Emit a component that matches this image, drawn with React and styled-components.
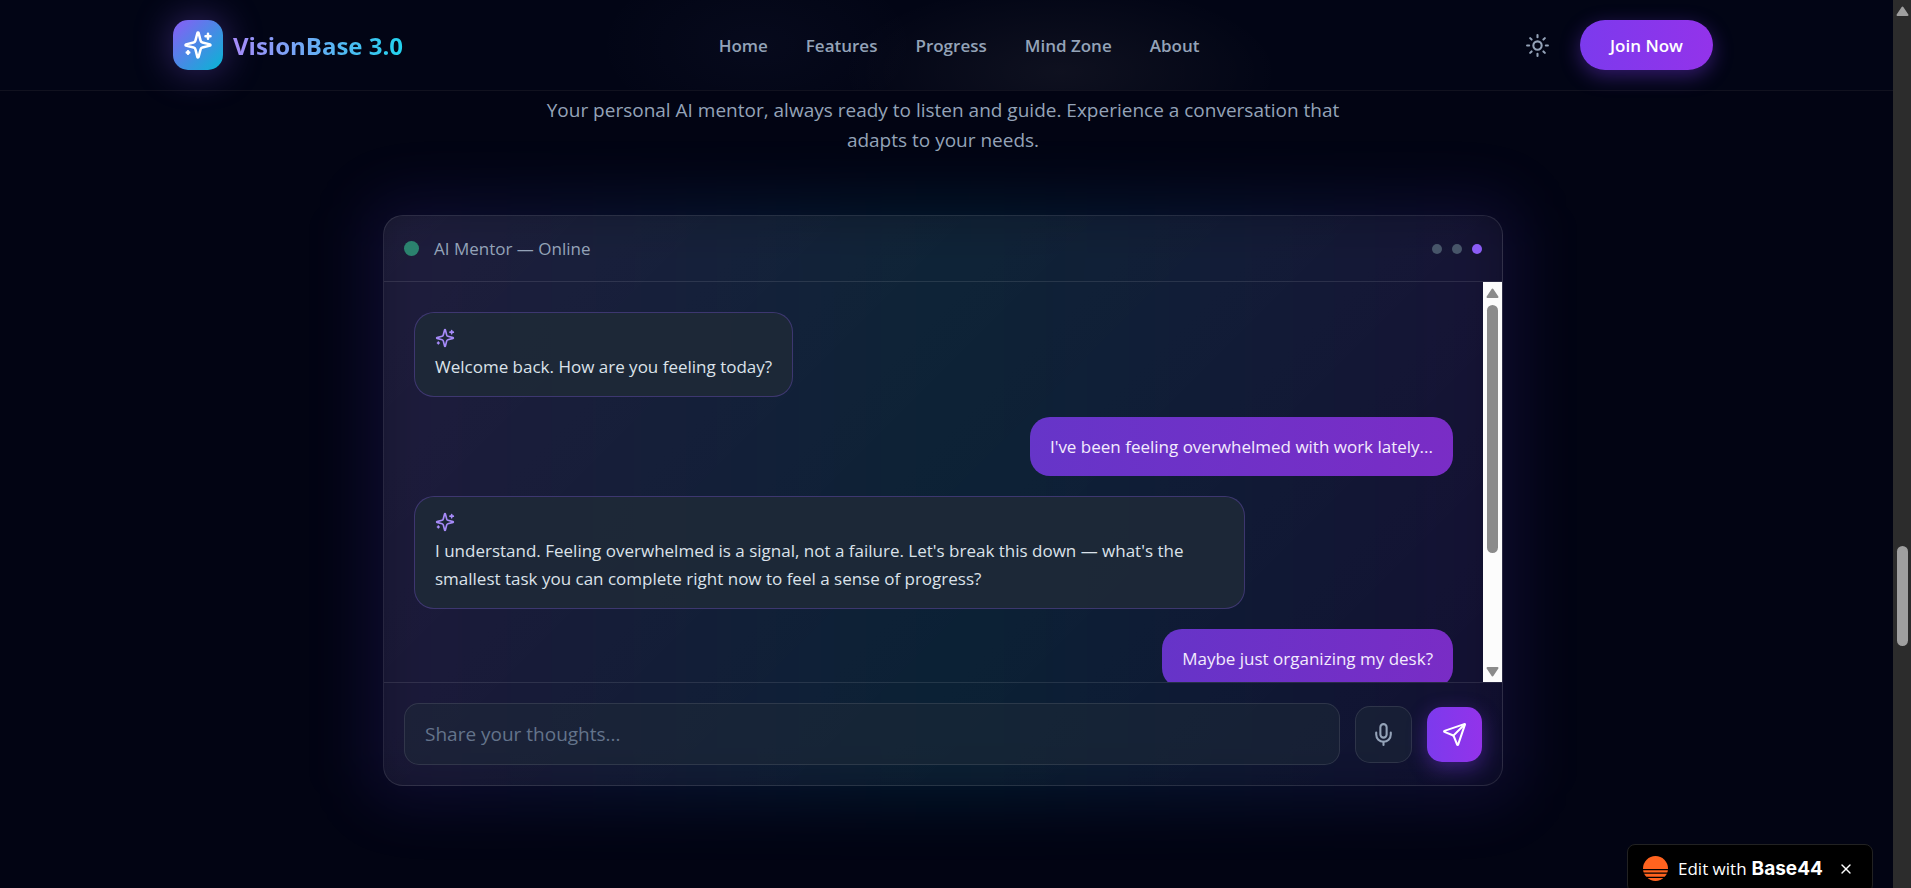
import { useState } from 'react';
import styled, { createGlobalStyle, css } from 'styled-components';
import { Sun, Mic, Send, X } from 'lucide-react';

const GlobalStyle = createGlobalStyle`
  *, *::before, *::after {
    box-sizing: border-box;
  }

  body {
    margin: 0;
    background: #020413;
    color: #e2e8f0;
    font-family: 'Open Sans', 'Noto Sans', sans-serif;
  }

  button, input {
    font-family: inherit;
  }

  p {
    margin: 0;
  }
`;

const Shell = styled.div`
  display: flex;
  height: 100vh;
  overflow: hidden;
`;

const Page = styled.div`
  position: relative;
  flex: 1;
  min-width: 0;
  overflow: hidden;
`;

const Header = styled.header`
  position: relative;
  z-index: 2;
  padding-right: 7px;
  border-bottom: 1px solid #11121f;
  background:
    radial-gradient(ellipse 220px 90px at 56% 80%, rgba(255, 240, 230, .05), transparent),
    radial-gradient(ellipse 160px 90px at 40% 50%, rgba(150, 160, 255, .03), transparent),
    #020515;
`;

const Container = styled.div`
  display: flex;
  align-items: center;
  justify-content: space-between;
  max-width: 1600px;
  margin: 0 auto;
  padding: 20px 30px;
`;

const Brand = styled.a`
  display: flex;
  align-items: center;
  gap: 10px;
  text-decoration: none;
`;

const BrandIcon = styled.span`
  display: flex;
  align-items: center;
  justify-content: center;
  width: 50px;
  height: 50px;
  border-radius: 15px;
  color: #fff;
  background: linear-gradient(135deg, #8b5cf6, #06b6d4);
  box-shadow: 0 0 38px rgba(139, 92, 246, .4);
`;

const BrandName = styled.span`
  padding-top: 2px;
  font-size: 24px;
  font-weight: 700;
  line-height: 36px;
  color: transparent;
  background: linear-gradient(90deg, #a78bfa, #22d3ee);
  background-clip: text;
  -webkit-background-clip: text;
`;

const Nav = styled.nav`
  display: flex;
  gap: 38px;
  padding-top: 2px;
`;

const NavLink = styled.a`
  color: #94a3b8;
  font-size: 17px;
  font-weight: 600;
  line-height: 26px;
  text-decoration: none;
`;

const Actions = styled.div`
  display: flex;
  align-items: center;
  gap: 20px;
`;

const ThemeButton = styled.button`
  display: flex;
  padding: 10px;
  border: 0;
  background: none;
  color: #94a3b8;
`;

const JoinButton = styled.button`
  height: 50px;
  padding: 0 30px;
  border: 0;
  border-radius: 25px;
  color: #fff;
  background: linear-gradient(90deg, #7c3aed, #9333ea);
  box-shadow: 0 6px 20px rgba(124, 58, 237, .4);
  font-size: 17px;
  font-weight: 600;
`;

const Section = styled.section`
  padding: 4px 7px 100px 0;
`;

const Lead = styled.p`
  max-width: 840px;
  margin: 0 auto 60px;
  color: #94a3b8;
  font-size: 19px;
  line-height: 30px;
  text-align: center;
`;

const Stage = styled.div`
  position: relative;
  max-width: 1120px;
  margin: 0 auto;

  &::before {
    content: '';
    position: absolute;
    inset: -15px;
    border-radius: 30px;
    background: linear-gradient(90deg, rgba(105, 62, 237, .13), rgba(6, 170, 225, .13), rgba(105, 62, 237, .13));
    filter: blur(30px);
  }
`;

const Card = styled.div`
  position: relative;
  overflow: hidden;
  border: 1px solid rgba(255, 255, 255, .1);
  border-radius: 20px;
  background: linear-gradient(135deg, rgba(255, 255, 255, .07), rgba(255, 255, 255, .02));
`;

const CardHeader = styled.div`
  display: flex;
  align-items: center;
  gap: 15px;
  height: 66px;
  padding: 0 20px;
  border-bottom: 1px solid rgba(255, 255, 255, .1);
`;

const Dot = styled.span`
  flex: none;
  width: ${props => props.$size}px;
  height: ${props => props.$size}px;
  border-radius: 50%;
  background: ${props => props.$color};
`;

const Status = styled.span`
  flex: 1;
  color: #94a3b8;
  font-size: 17px;
  line-height: 26px;
`;

const Dots = styled.div`
  display: flex;
  gap: 10px;
`;

const Chat = styled.div`
  display: flex;
  height: 400px;
`;

const Messages = styled.div`
  display: flex;
  flex: 1;
  flex-direction: column;
  align-items: flex-start;
  gap: 20px;
  padding: 30px;
  overflow: hidden;
`;

const Bubble = styled.div`
  flex: none;
  max-width: 80%;
  padding: 15px 20px;
  border-radius: 20px;
  font-size: 17px;
  line-height: 28px;

  ${props => props.$mine ? css`
    align-self: flex-end;
    color: #f3ebfd;
    background: linear-gradient(90deg, rgba(124, 58, 237, .8), rgba(147, 51, 234, .8));
    line-height: 29px;
  ` : css`
    border: 1px solid rgba(139, 92, 246, .3);
    color: #dbe2ea;
    background: rgba(30, 41, 55, .9);
  `}

  svg {
    display: block;
    margin-bottom: 5px;
    color: #a78bfa;
  }
`;

const Composer = styled.form`
  display: flex;
  align-items: center;
  gap: 15px;
  padding: 20px;
  border-top: 1px solid rgba(255, 255, 255, .1);
`;

const Field = styled.input`
  flex: 1;
  min-width: 0;
  height: 62px;
  padding: 0 20px;
  border: 1px solid rgba(255, 255, 255, .1);
  border-radius: 15px;
  outline: 0;
  background: rgba(30, 41, 55, .5);
  color: #e2e8f0;
  font-size: 19px;

  &::placeholder {
    color: #64748b;
    opacity: 1;
  }
`;

const IconButton = styled.button`
  display: flex;
  align-items: center;
  justify-content: center;
  width: 57px;
  height: 57px;
  border: 1px solid rgba(255, 255, 255, .1);
  border-radius: 15px;
  color: #94a3b8;
  background: rgba(30, 41, 55, .5);

  ${props => props.$primary && css`
    width: 55px;
    height: 55px;
    border: 0;
    color: #fff;
    background: linear-gradient(90deg, #7c3aed, #9333ea);
    box-shadow: 0 6px 20px rgba(124, 58, 237, .4);
  `}
`;

const ScrollTrack = styled.div`
  display: flex;
  flex: none;
  flex-direction: column;
  align-items: center;
  width: ${props => props.$dark ? 18 : 19}px;
  padding: 6px 0 5px;
  background: ${props => props.$dark ? '#2c2c2c' : '#fcfcfc'};
  color: ${props => props.$dark ? '#9f9f9f' : '#8b8b8b'};
`;

const ScrollRail = styled.div`
  flex: 1;
  width: 11px;
  padding-top: ${props => props.$start}px;
`;

const ScrollThumb = styled.div`
  height: ${props => props.$length}px;
  border-radius: 6px;
  background: currentColor;
`;

const Badge = styled.div`
  position: absolute;
  z-index: 3;
  right: 20px;
  bottom: -5px;
  display: flex;
  align-items: center;
  height: 49px;
  width: 246px;
  padding: 0 15px;
  border: 1px solid #222;
  border-radius: 8px;
  background: #000;
`;

const BadgeLink = styled.a`
  display: flex;
  flex: 1;
  align-items: center;
  color: #fff;
  font-size: 17px;
  text-decoration: none;
  white-space: nowrap;

  svg {
    margin-right: 10px;
  }

  strong {
    margin-left: 5px;
    font-family: Inter, sans-serif;
    font-size: 19px;
    font-weight: 700;
  }
`;

const BadgeClose = styled.button`
  display: flex;
  padding: 3px;
  border: 0;
  background: none;
  color: #fff;
`;

const links = ['Home', 'Features', 'Progress', 'Mind Zone', 'About'];

const messages = [
  { text: 'Welcome back. How are you feeling today?' },
  { mine: true, text: "I've been feeling overwhelmed with work lately..." },
  { text: "I understand. Feeling overwhelmed is a signal, not a failure. Let's break this down — what's the smallest task you can complete right now to feel a sense of progress?" },
  { mine: true, text: 'Maybe just organizing my desk?' }
];

const Sparkles = ({ size }) => (
  <svg
    width={size}
    height={size}
    viewBox="0 0 24 24"
    fill="none"
    stroke="currentColor"
    strokeWidth="2"
    strokeLinecap="round"
    strokeLinejoin="round"
    aria-hidden="true"
  >
    <path d="M9.937 15.5A2 2 0 0 0 8.5 14.063l-6.135-1.582a.5.5 0 0 1 0-.962L8.5 9.936A2 2 0 0 0 9.937 8.5l1.582-6.135a.5.5 0 0 1 .963 0L14.063 8.5A2 2 0 0 0 15.5 9.937l6.135 1.581a.5.5 0 0 1 0 .964L15.5 14.063a2 2 0 0 0-1.437 1.437l-1.582 6.135a.5.5 0 0 1-.963 0z" />
    <path d="M20 3v4M22 5h-4M4 17v2M5 18H3" />
  </svg>
);

const Arrow = ({ down }) => (
  <svg width="13" height="10" viewBox="0 0 13 10" aria-hidden="true">
    <path
      d={down ? 'M1.5 1h10L6.5 8.5z' : 'M1.5 9h10L6.5 1.5z'}
      fill="currentColor"
      stroke="currentColor"
      strokeWidth="2"
      strokeLinejoin="round"
    />
  </svg>
);

const Scrollbar = ({ dark, start, length }) => (
  <ScrollTrack $dark={dark} aria-hidden="true">
    <Arrow />
    <ScrollRail $start={start}>
      <ScrollThumb $length={length} />
    </ScrollRail>
    {!dark && <Arrow down />}
  </ScrollTrack>
);

const SunsetLogo = () => (
  <svg width="25" height="25" viewBox="0 0 25 25" aria-hidden="true">
    <circle cx="12.5" cy="12.5" r="12.5" fill="#ff631f" />
    <path d="M0 13.6h25M0 17.1h25M0 21.3h25" stroke="#000" strokeWidth="1.3" />
  </svg>
);

const App = () => {
  const [draft, setDraft] = useState('');

  const onSubmit = e => {
    e.preventDefault();
    setDraft('');
  }

  return (
    <Shell>
      <GlobalStyle />
      <Page>
        <Header>
          <Container>
            <Brand href="#home">
              <BrandIcon><Sparkles size={30} /></BrandIcon>
              <BrandName>VisionBase 3.0</BrandName>
            </Brand>
            <Nav>
              {links.map(link => (
                <NavLink key={link} href={`#${link.toLowerCase().replace(' ', '-')}`}>{link}</NavLink>
              ))}
            </Nav>
            <Actions>
              <ThemeButton type="button" aria-label="Toggle theme"><Sun size={25} /></ThemeButton>
              <JoinButton type="button">Join Now</JoinButton>
            </Actions>
          </Container>
        </Header>

        <Section>
          <Lead>
            Your personal AI mentor, always ready to listen and guide. Experience a conversation that adapts to your needs.
          </Lead>
          <Stage>
            <Card>
              <CardHeader>
                <Dot $size={15} $color="#2b826e" />
                <Status>AI Mentor — Online</Status>
                <Dots>
                  <Dot $size={10} $color="#475569" />
                  <Dot $size={10} $color="#475569" />
                  <Dot $size={10} $color="#8b5cf6" />
                </Dots>
              </CardHeader>
              <Chat>
                <Messages>
                  {messages.map(message => (
                    <Bubble key={message.text} $mine={message.mine}>
                      {!message.mine && <Sparkles size={20} />}
                      {message.text}
                    </Bubble>
                  ))}
                </Messages>
                <Scrollbar start={7} length={248} />
              </Chat>
              <Composer onSubmit={onSubmit}>
                <Field
                  aria-label="Message"
                  placeholder="Share your thoughts..."
                  value={draft}
                  onChange={e => setDraft(e.target.value)}
                />
                <IconButton type="button" aria-label="Record voice"><Mic size={25} /></IconButton>
                <IconButton type="submit" aria-label="Send" $primary><Send size={25} /></IconButton>
              </Composer>
            </Card>
          </Stage>
        </Section>

        <Badge>
          <BadgeLink href="#edit">
            <SunsetLogo />
            Edit with <strong>Base44</strong>
          </BadgeLink>
          <BadgeClose type="button" aria-label="Close"><X size={16} /></BadgeClose>
        </Badge>
      </Page>
      <Scrollbar dark start={530} length={100} />
    </Shell>
  );
}

export default App;
